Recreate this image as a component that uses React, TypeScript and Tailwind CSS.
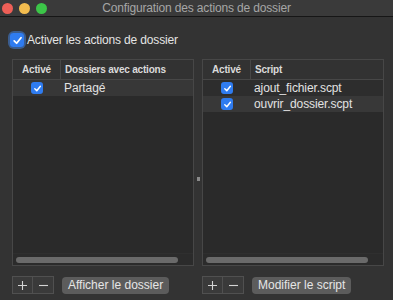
import React from 'react';

function Check({ size = 12 }: { size?: number }) {
  return (
    <span
      className="flex items-center justify-center rounded-[3px] bg-[#2f7cf0]"
      style={{ width: size, height: size }}
    >
      <svg width={size - 3} height={size - 3} viewBox="0 0 10 10" fill="none">
        <path d="M2 5.3 L4.2 7.5 L8.2 2.5" stroke="white" strokeWidth="1.6" strokeLinecap="round" strokeLinejoin="round" />
      </svg>
    </span>
  );
}

type Row = { label: string; bg: string };

function Table({ title, rows }: { title: string; rows: Row[] }) {
  return (
    <div className="flex-1 flex flex-col border border-[#474747] bg-[#2a2a2a]">
      <div className="flex h-[20px] shrink-0 items-center border-b border-[#474747] bg-[#323232] text-[10px] font-bold tracking-[-0.2px] text-[#dadada]">
        <div className="w-[48px] text-center border-r border-[#474747] h-full flex items-center justify-center">Activé</div>
        <div className="pl-[4px]">{title}</div>
      </div>
      {rows.map((r) => (
        <div key={r.label} className={`flex h-[16px] items-center ${r.bg}`}>
          <div className="w-[48px] flex justify-center">
            <Check />
          </div>
          <div className="pl-[3px] text-[12px] tracking-[-0.1px] text-[#e2e2e2]">{r.label}</div>
        </div>
      ))}
      <div className="flex-1" />
      <div className="h-[12px] shrink-0 flex items-center px-[3px] bg-[#2b2b2b] border-t border-[#2f2f2f]">
        <div className="h-[6px] w-[calc(100%-12px)] rounded-full bg-[#6a6a6a]" />
      </div>
    </div>
  );
}

function Footer({ label }: { label: string }) {
  return (
    <div className="flex items-center gap-[8px] h-[18px]">
      <div className="flex h-[18px] border border-[#505050] bg-[#3a3a3a]">
        <div className="w-[20px] flex items-center justify-center border-r border-[#505050]">
          <svg width="9" height="9" viewBox="0 0 9 9">
            <path d="M4.5 0 V9 M0 4.5 H9" stroke="#d4d4d4" strokeWidth="1.1" />
          </svg>
        </div>
        <div className="w-[20px] flex items-center justify-center">
          <svg width="9" height="9" viewBox="0 0 9 9">
            <path d="M0 4.5 H9" stroke="#d4d4d4" strokeWidth="1.1" />
          </svg>
        </div>
      </div>
      <div className="h-[17px] px-[6px] flex items-center rounded-[4px] bg-[#5c5c5c] text-[12px] text-[#e6e6e6]">
        {label}
      </div>
    </div>
  );
}

export default function App() {
  return (
    <div className="w-[393px] h-[300px] flex flex-col bg-[#333333] font-['Liberation_Sans',Arial,sans-serif] overflow-hidden">
      <div className="h-[17px] shrink-0 grid grid-cols-[1fr_auto_1fr] items-center bg-[#3a3a3a] border-b border-[#161616]">
        <div className="flex items-center gap-[6px] pl-[2px]">
          <span className="w-[11px] h-[11px] rounded-full bg-[#ee5f57]" />
          <span className="w-[11px] h-[11px] rounded-full bg-[#f3bd4f]" />
          <span className="w-[11px] h-[11px] rounded-full bg-[#3cc548]" />
        </div>
        <div className="text-[12px] tracking-[-0.15px] text-[#a6a6a6] leading-none">Configuration des actions de dossier</div>
        <div />
      </div>

      <div className="flex items-center gap-[3px] pl-[10px] mt-[16px] h-[14px]">
        <span className="rounded-[4px] ring-2 ring-[#3e6fb5]/70">
          <Check size={14} />
        </span>
        <span className="text-[12px] tracking-[-0.15px] text-[#e4e4e4]">Activer les actions de dossier</span>
      </div>

      <div className="flex flex-1 px-[12px] pr-[9px] mt-[12px] mb-[10px]">
        <Table title="Dossiers avec actions" rows={[{ label: 'Partagé', bg: 'bg-[#373737]' }]} />
        <div className="w-[8px] shrink-0 flex items-center justify-center pt-[32px]">
          <span className="w-[3px] h-[4px] bg-[#8a8a8a]" />
        </div>
        <Table
          title="Script"
          rows={[
            { label: 'ajout_fichier.scpt', bg: 'bg-[#2d2d2d]' },
            { label: 'ouvrir_dossier.scpt', bg: 'bg-[#383838]' },
          ]}
        />
      </div>

      <div className="flex px-[12px] pb-[6px]">
        <div className="w-[190px]">
          <Footer label="Afficher le dossier" />
        </div>
        <Footer label="Modifier le script" />
      </div>
    </div>
  );
}
